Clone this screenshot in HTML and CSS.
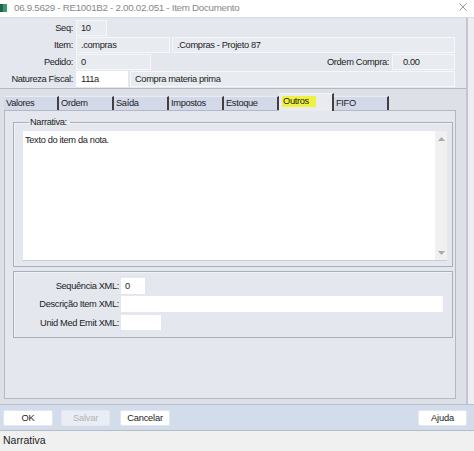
FILE: index.html
```html
<!DOCTYPE html>
<html lang="pt-BR">
<head>
<meta charset="utf-8">
<title>Item Documento</title>
<link rel="stylesheet" href="styles.css">
</head>
<body>
<div class="win">
  <div class="titlebar">
    <span class="appicon"></span>
    <span class="title">06.9.5629 - RE1001B2 - 2.00.02.051 - Item Documento</span>
    <svg class="close" width="8" height="8" viewBox="0 0 8 8"><path d="M0.5 0.5 L7.5 7.5 M7.5 0.5 L0.5 7.5" stroke="#9a9a9a" stroke-width="1" fill="none"/></svg>
  </div>
  <div class="content">
    <div class="header">
      <div class="row">
        <span class="lbl">Seq:</span>
        <div class="fld w-seq">10</div>
      </div>
      <div class="row">
        <span class="lbl">Item:</span>
        <div class="fld w-item">.compras</div>
        <div class="fld grow">.Compras - Projeto 87</div>
      </div>
      <div class="row">
        <span class="lbl">Pedido:</span>
        <div class="fld w-ped">0</div>
        <span class="lbl-right">Ordem Compra:</span>
        <div class="fld w-oc">0.00</div>
      </div>
      <div class="row">
        <span class="lbl">Natureza Fiscal:</span>
        <div class="fld white w-nat">111a</div>
        <div class="fld grow">Compra materia prima</div>
      </div>
    </div>
    <div class="tabs">
      <div class="tab">Valores</div>
      <div class="tab">Ordem</div>
      <div class="tab">Saída</div>
      <div class="tab">Impostos</div>
      <div class="tab">Estoque</div>
      <div class="tab active"><span class="hl">Outros</span></div>
      <div class="tab">FIFO</div>
    </div>
    <div class="tabpanel">
      <fieldset class="group g-narr">
        <legend>Narrativa:</legend>
        <div class="memo">
          <div class="memo-text">Texto do item da nota.</div>
          <div class="vscroll">
            <svg width="7" height="4" viewBox="0 0 7 4"><path d="M0 4 L3.5 0 L7 4 Z" fill="#a9a9a9"/></svg>
            <svg width="7" height="4" viewBox="0 0 7 4"><path d="M0 0 L3.5 4 L7 0 Z" fill="#a9a9a9"/></svg>
          </div>
        </div>
      </fieldset>
      <div class="group g-xml">
        <div class="xrow">
          <span class="xlbl">Sequência XML:</span>
          <div class="xfld w-xseq">0</div>
        </div>
        <div class="xrow">
          <span class="xlbl">Descrição Item XML:</span>
          <div class="xfld w-xdesc"></div>
        </div>
        <div class="xrow short">
          <span class="xlbl">Unid Med Emit XML:</span>
          <div class="xfld w-xun"></div>
        </div>
      </div>
    </div>
  </div>
  <div class="buttonbar">
    <button class="btn w-ok">OK</button>
    <button class="btn disabled w-salvar">Salvar</button>
    <button class="btn w-cancel">Cancelar</button>
    <span class="spacer"></span>
    <button class="btn w-ajuda">Ajuda</button>
  </div>
  <div class="statusbar">Narrativa</div>
</div>
</body>
</html>
```
FILE: styles.css
```css
* { box-sizing: border-box; }
html, body { margin: 0; padding: 0; }
body {
  width: 474px;
  height: 451px;
  overflow: hidden;
  background: #eceef2;
  font-family: "Liberation Sans", Arial, sans-serif;
  font-size: 9.3px;
  letter-spacing: -0.35px;
  color: #1c1c1c;
}
.win { width: 474px; height: 451px; display: flex; flex-direction: column; }

/* title bar */
.titlebar {
  height: 18px;
  flex: none;
  background: #fff;
  border-bottom: 1px solid #d9dbe0;
  display: flex;
  align-items: center;
}
.appicon {
  width: 7px; height: 8px; margin-top: -2px;
  background: linear-gradient(90deg, #235f52 0 45%, #3c9a6a 45% 100%);
}
.title { margin-left: 7px; font-size: 9.8px; letter-spacing: -0.3px; color: #888; margin-top: -2px; }
.close { margin-left: auto; margin-right: 7px; margin-top: -3px; }

/* content */
.content {
  width: 468px;
  height: 386px;
  flex: none;
  background: #dde0e7;
  border-right: 2px solid #c2c6ce;
  display: flex;
  flex-direction: column;
}
.header {
  height: 71px;
  flex: none;
  background: #e4e7ee;
  border-bottom: 1px solid #b4b8c2;
  padding: 2px 11px 0 0;
  display: flex;
  flex-direction: column;
  gap: 1px;
}
.row { display: flex; align-items: center; height: 16px; gap: 2px; }
.lbl { width: 74px; text-align: right; padding-right: 1px; flex: none; color: #222; }
.lbl-right { margin-left: auto; padding-right: 1px; color: #222; }
.fld {
  height: 16px;
  background: #e8ebf0;
  border: 1px solid #f6f7f9;
  padding: 0 4px;
  line-height: 14px;
  white-space: nowrap;
  flex: none;
}
.fld.white { background: #fff; border-color: #fff; }
.fld.grow { flex: 1; }
.w-seq { width: 31px; }
.w-item { width: 94px; }
.w-ped { width: 75px; }
.w-oc { width: 63px; padding-left: 10px; }
.w-nat { width: 52px; }

/* tabs */
.tabs {
  margin: 4px 0 0 4px;
  height: 17px;
  flex: none;
  display: flex;
  align-items: flex-end;
  position: relative;
  z-index: 1;
}
.tab {
  width: 55px;
  height: 14px;
  background: #d3d9e9;
  border-top: 1px solid #e9ecf4;
  border-right: 2px solid #404040;
  padding-left: 2px;
  line-height: 13px;
  color: #1c1c1c;
}
.tab.active {
  height: 18px;
  margin-bottom: -1px;
  background: #e9ebf1;
  border-top-color: #f4f5f8;
  line-height: 12px;
  padding-left: 3px;
  padding-top: 1px;
}
.hl { display: inline-block; background: #eef23c; padding: 0 4px 0 1px; width: 34px; height: 11px; line-height: 11px; }

/* tab panel */
.tabpanel {
  flex: 1;
  margin: 0 10px 5px 4px;
  background: #e4e7ee;
  border: 1px solid #b3b8c2;
  padding: 5px 2px 0 8px;
  display: flex;
  flex-direction: column;
}
.group {
  margin: 0;
  border: 1px solid #a9aeb8;
  box-shadow: inset 1px 1px 0 #f2f3f6;
}
.g-narr { padding: 3px 5px 5px 9px; min-width: 0; }
.g-narr legend { padding: 0 3px 0 1px; margin-left: 6px; line-height: 12px; height: 12px; color: #222; }
.memo {
  height: 130px;
  background: #fff;
  border-bottom: 1px solid #c9cdd5;
  display: flex;
}
.memo-text { flex: 1; padding: 3px 2px; line-height: 12px; }
.vscroll {
  width: 12px;
  background: #f0f0f1;
  display: flex;
  flex-direction: column;
  justify-content: space-between;
  align-items: center;
  padding: 6px 0 5px;
}
.g-xml {
  margin-top: 4px;
  height: 67px;
  padding-top: 6px;
  display: flex;
  flex-direction: column;
  gap: 2px;
}
.xrow { display: flex; align-items: center; height: 16px; gap: 2px; }
.xrow.short { height: 15px; margin-top: 1px; }
.xlbl { width: 105px; text-align: right; flex: none; color: #222; }
.xfld { height: 100%; background: #fff; padding: 0 4px; line-height: 16px; flex: none; }
.w-xseq { width: 24px; }
.w-xdesc { width: 322px; }
.w-xun { width: 40px; }

/* buttons */
.buttonbar {
  height: 27px;
  flex: none;
  background: #d3dcea;
  border-top: 1px solid #b9c0cd;
  border-bottom: 1px solid #b6bdc9;
  display: flex;
  align-items: flex-start;
  padding: 5px 7px 0 3px;
}
.btn {
  font-family: inherit;
  font-size: 9.3px;
  letter-spacing: -0.2px;
  color: #1c1c1c;
  height: 16px;
  background: #fff;
  border: 1px solid #e2e6ee;
  border-radius: 2px;
  padding: 0;
  line-height: 14px;
  flex: none;
}
.btn.disabled { color: #b3b3b3; background: #e9edf4; border-color: #e3e8f0; }
.w-ok { width: 50px; }
.w-salvar { width: 49px; margin-left: 8px; }
.w-cancel { width: 50px; margin-left: 10px; }
.w-ajuda { width: 49px; }
.spacer { flex: 1; }

.statusbar {
  height: 20px;
  flex: none;
  background: #f0f0f0;
  padding-left: 3px;
  line-height: 19px;
  font-size: 10.5px;
  letter-spacing: 0;
  color: #222;
}
```
